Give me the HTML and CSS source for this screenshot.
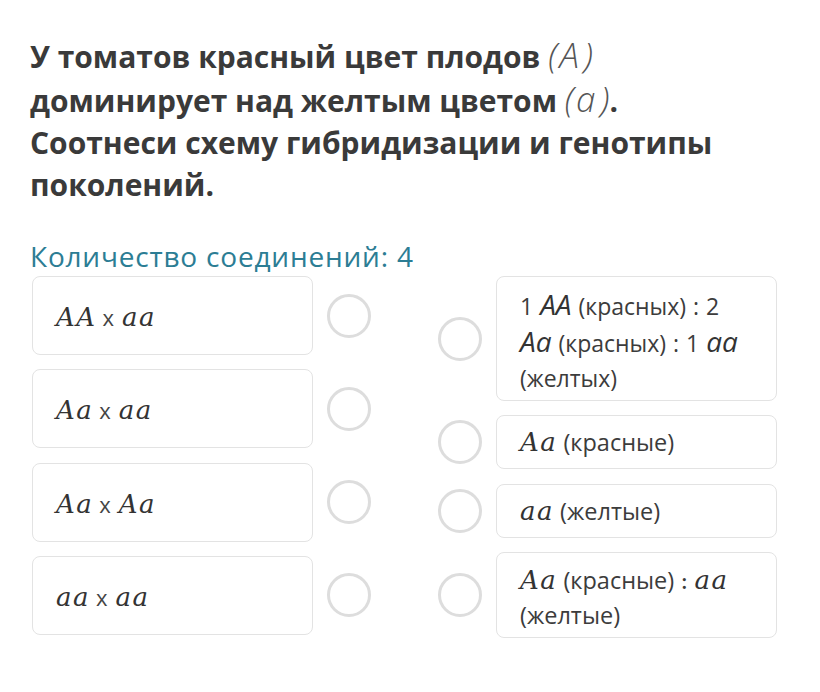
FILE: index.html
```html
<!DOCTYPE html>
<html lang="ru">
<head>
<meta charset="utf-8">
<link rel="stylesheet" href="styles.css">
</head>
<body>
<div class="page">
  <h1 class="title">У томатов красный цвет плодов <span class="paren">(<i>A</i>)</span><br>доминирует над желтым цветом <span class="paren">(<i>a</i>)</span>.<br>Соотнеси схему гибридизации и генотипы<br>поколений.</h1>
  <div class="count">Количество соединений: 4</div>
  <div class="board">
    <div class="col">
      <div class="row left">
        <div class="card tall1"><span class="m">AA</span><span class="x">x</span><span class="m">aa</span></div>
        <span class="dot"></span>
      </div>
      <div class="row left">
        <div class="card tall1"><span class="m">Aa</span><span class="x">x</span><span class="m">aa</span></div>
        <span class="dot"></span>
      </div>
      <div class="row left">
        <div class="card tall1"><span class="m">Aa</span><span class="x">x</span><span class="m">Aa</span></div>
        <span class="dot"></span>
      </div>
      <div class="row left">
        <div class="card tall1"><span class="m">aa</span><span class="x">x</span><span class="m">aa</span></div>
        <span class="dot"></span>
      </div>
    </div>
    <div class="col">
      <div class="row right">
        <span class="dot"></span>
        <div class="card txt big">1 <i class="si">AA</i> (красных) : 2<br><i class="si">Aa</i> (красных) : 1 <i class="si">aa</i><br>(желтых)</div>
      </div>
      <div class="row right">
        <span class="dot"></span>
        <div class="card txt small"><span class="m">Aa</span> (красные)</div>
      </div>
      <div class="row right">
        <span class="dot"></span>
        <div class="card txt small"><span class="m">aa</span> (желтые)</div>
      </div>
      <div class="row right">
        <span class="dot"></span>
        <div class="card txt mid"><span class="m">Aa</span> (красные) <span class="colon">:</span> <span class="m">aa</span><br>(желтые)</div>
      </div>
    </div>
  </div>
</div>
</body>
</html>
```

FILE: styles.css
```css
html, body {
  margin: 0;
  padding: 0;
  background: #ffffff;
}
body {
  font-family: "Open Sans", "Noto Sans", sans-serif;
  color: #3a3a3a;
}
.page {
  padding: 34px 0 0 30px;
  width: 770px;
}
.title {
  margin: 0;
  font-size: 30px;
  line-height: 42px;
  font-weight: 700;
  color: #3a3a3a;
  white-space: nowrap;
}
.paren {
  font-weight: 300;
  font-style: italic;
  font-size: 35px;
  color: #555;
}
.paren i {
  padding: 0 5px 0 2px;
}
.count {
  margin-top: 34px;
  font-size: 28px;
  letter-spacing: 0.8px;
  line-height: 32px;
  color: #2c7d94;
}
.board {
  margin-top: 4px;
  margin-left: 2px;
  display: flex;
  gap: 67px;
}
.col {
  display: flex;
  flex-direction: column;
  gap: 14.3px;
}
.row {
  display: flex;
  align-items: center;
  gap: 14px;
}
.card {
  box-sizing: border-box;
  width: 281px;
  border: 1px solid #e3e3e3;
  border-radius: 8px;
  background: #fff;
  padding: 0 23px;
  display: flex;
  align-items: center;
  flex-wrap: wrap;
}
.tall1 {
  height: 79px;
  padding-top: 3px;
}
.m {
  font-family: "DejaVu Serif", "Liberation Serif", serif;
  font-style: italic;
  font-size: 26px;
  color: #333;
  letter-spacing: 1.5px;
}
.x {
  font-family: "Open Sans", sans-serif;
  font-size: 22px;
  color: #444;
  margin: 0 8px 0 6px;
}
.dot {
  flex: none;
  box-sizing: border-box;
  width: 44px;
  height: 44px;
  border: 3px solid #dddddd;
  border-radius: 50%;
}
.txt {
  display: block;
  font-size: 23.5px;
  line-height: 34px;
  color: #3c3c3c;
}
.txt .m {
  font-size: 26px;
}
.big {
  height: 125px;
  padding-top: 10px;
  font-size: 23px;
  line-height: 35px;
  word-spacing: 1px;
}
.small {
  height: 54px;
  padding-top: 9px;
}
.mid {
  height: 86px;
  padding-top: 10px;
}
.si {
  font-style: italic;
  font-size: 28px;
  color: #333;
}
.colon {
  font-family: "DejaVu Serif", serif;
  font-size: 24px;
}
```
